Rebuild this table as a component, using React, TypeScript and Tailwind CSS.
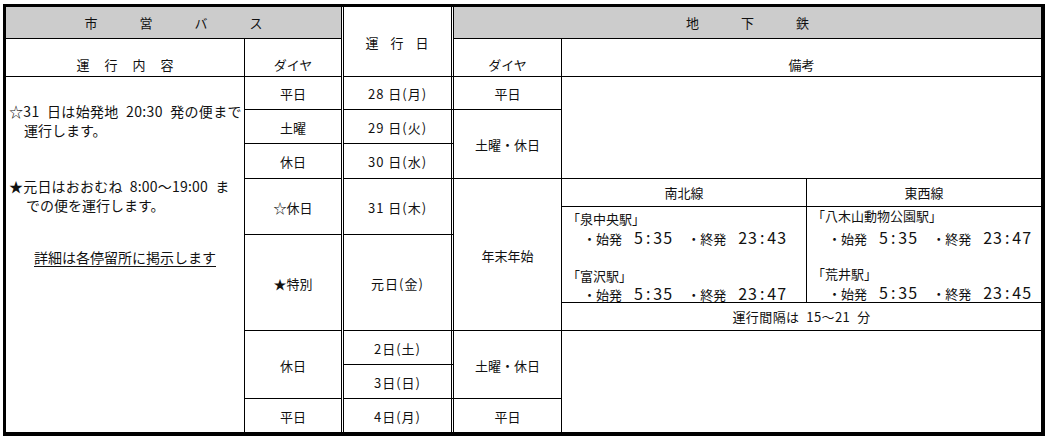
import type { ReactNode } from 'react'

const EN = '\u2002'

function Cell({ className = '', children }: { className?: string; children?: ReactNode }) {
  return (
    <div className={`flex items-center justify-center border-black whitespace-nowrap ${className}`}>
      {children}
    </div>
  )
}

function Spaced({ chars, gap }: { chars: string[]; gap: string }) {
  return (
    <div className={`flex ${gap}`}>
      {chars.map((c, i) => (
        <span key={i}>{c}</span>
      ))}
    </div>
  )
}

function Clock({ t }: { t: string }) {
  const [h, m] = t.split(':')
  return (
    <span className="ml-[12px] text-[16px] tracking-[1px]">
      {h}
      <span className="mx-[2px]">:</span>
      {m}
    </span>
  )
}

function Time({ first, last }: { first: string; last: string }) {
  return (
    <div className="h-[18px] whitespace-nowrap leading-[18px]">
      <span>・始発</span>
      <Clock t={first} />
      <span className="ml-[14px]">・終発</span>
      <Clock t={last} />
    </div>
  )
}

// 備考 block for the new-year rows
function SubwayNote() {
  return (
    <div className="grid h-full grid-cols-[245px_1fr] grid-rows-[28px_96px_1fr]">
      <Cell className="border-r border-b">南北線</Cell>
      <Cell className="border-b">東西線</Cell>
      <div className="border-r border-b border-black pl-[5px] pt-[3px]">
        <p className="h-[18px] leading-[18px]">「泉中央駅」</p>
        <div className="pl-[16px]">
          <Time first="5:35" last="23:43" />
        </div>
        <p className="mt-[21px] h-[17px] leading-[17px]">「富沢駅」</p>
        <div className="pl-[16px]">
          <Time first="5:35" last="23:47" />
        </div>
      </div>
      <div className="border-b border-black pl-[5px]">
        <p className="h-[18px] leading-[18px]">「八木山動物公園駅」</p>
        <div className="pl-[16px] pt-[3px]">
          <Time first="5:35" last="23:47" />
        </div>
        <p className="mt-[19px] h-[18px] leading-[18px]">「荒井駅」</p>
        <div className="pl-[16px]">
          <Time first="5:35" last="23:45" />
        </div>
      </div>
      <Cell className="col-span-2 tracking-[0.4px]">運行間隔は{EN}15〜21{EN}分</Cell>
    </div>
  )
}

export default function App() {
  const day = 'border-x-[3px] border-double tracking-[1px]'
  return (
    <div className="min-h-screen bg-white pl-[3px] pt-[4px] font-['Noto_Sans_CJK_JP',sans-serif] text-[13px] text-[#111]">
      <div className="grid h-[432px] w-[1042px] grid-cols-[239px_96px_113px_108px_479px] grid-rows-[32px_38px_33px_34px_35px_56px_96px_34px_34px_33px] border-t-[3px] border-r-[4px] border-b-[4px] border-l-[3px] border-black">
        {/* header row */}
        <Cell className="col-span-2 col-start-1 row-start-1 border-b bg-[#cccccc]">
          <Spaced chars={['市', '営', 'バ', 'ス']} gap="gap-[42px]" />
        </Cell>
        <Cell className={`col-start-3 row-span-2 row-start-1 border-b pt-[3px] ${day}`}>
          <Spaced chars={['運', '行', '日']} gap="gap-[11px]" />
        </Cell>
        <Cell className="col-span-2 col-start-4 row-start-1 border-b bg-[#cccccc]">
          <Spaced chars={['地', '下', '鉄']} gap="gap-[42px]" />
        </Cell>

        <Cell className="col-start-1 row-start-2 items-end border-r border-b pb-[2px]">
          <Spaced chars={['運', '行', '内', '容']} gap="gap-[15px]" />
        </Cell>
        <Cell className="col-start-2 row-start-2 items-end border-b pb-[2px]">ダイヤ</Cell>
        <Cell className="col-start-4 row-start-2 items-end border-r border-b pb-[2px]">ダイヤ</Cell>
        <Cell className="col-start-5 row-start-2 items-end border-b pb-[2px]">備考</Cell>

        {/* bus notes */}
        <div className="col-start-1 row-span-8 row-start-3 border-r border-black pt-[25px] text-[14px] leading-[19px] whitespace-nowrap">
          <p className="pl-[3px] tracking-[0.35px]">☆31{EN}日は始発地{EN}20:30{EN}発の便まで</p>
          <p className="pl-[18px]">運行します。</p>
          <p className="mt-[37px] pl-[3px] tracking-[0.2px]">★元日はおおむね{EN}8:00〜19:00{EN}ま</p>
          <p className="pl-[20px]">での便を運行します。</p>
          <p className="mt-[33px] text-center underline underline-offset-[3px]">詳細は各停留所に掲示します</p>
        </div>

        {/* bus timetable */}
        <Cell className="col-start-2 row-start-3 border-b pt-[2px]">平日</Cell>
        <Cell className="col-start-2 row-start-4 border-b pt-[2px]">土曜</Cell>
        <Cell className="col-start-2 row-start-5 border-b pt-[2px]">休日</Cell>
        <Cell className="col-start-2 row-start-6 border-b pt-[2px]">☆休日</Cell>
        <Cell className="col-start-2 row-start-7 border-b pt-[2px]">★特別</Cell>
        <Cell className="col-start-2 row-span-2 row-start-8 border-b pt-[2px]">休日</Cell>
        <Cell className="col-start-2 row-start-10 pt-[2px]">平日</Cell>

        {/* dates */}
        <Cell className={`col-start-3 row-start-3 border-b pt-[2px] ${day}`}>28 日(月)</Cell>
        <Cell className={`col-start-3 row-start-4 border-b pt-[2px] ${day}`}>29 日(火)</Cell>
        <Cell className={`col-start-3 row-start-5 border-b pt-[2px] ${day}`}>30 日(水)</Cell>
        <Cell className={`col-start-3 row-start-6 border-b pt-[2px] ${day}`}>31 日(木)</Cell>
        <Cell className={`col-start-3 row-start-7 border-b pt-[2px] ${day}`}>元日(金)</Cell>
        <Cell className={`col-start-3 row-start-8 border-b pt-[2px] ${day}`}>2日(土)</Cell>
        <Cell className={`col-start-3 row-start-9 border-b pt-[2px] ${day}`}>3日(日)</Cell>
        <Cell className={`col-start-3 row-start-10 pt-[2px] ${day}`}>4日(月)</Cell>

        {/* subway */}
        <Cell className="col-start-4 row-start-3 border-r border-b pt-[2px]">平日</Cell>
        <Cell className="col-start-4 row-span-2 row-start-4 border-r border-b pt-[2px]">土曜・休日</Cell>
        <Cell className="col-start-4 row-span-2 row-start-6 border-r border-b pt-[2px]">年末年始</Cell>
        <Cell className="col-start-4 row-span-2 row-start-8 border-r border-b pt-[2px]">土曜・休日</Cell>
        <Cell className="col-start-4 row-start-10 border-r pt-[2px]">平日</Cell>

        <div className="col-start-5 row-span-3 row-start-3 border-b border-black" />
        <div className="col-start-5 row-span-2 row-start-6 border-b border-black">
          <SubwayNote />
        </div>
        <div className="col-start-5 row-span-3 row-start-8" />
      </div>
    </div>
  )
}
